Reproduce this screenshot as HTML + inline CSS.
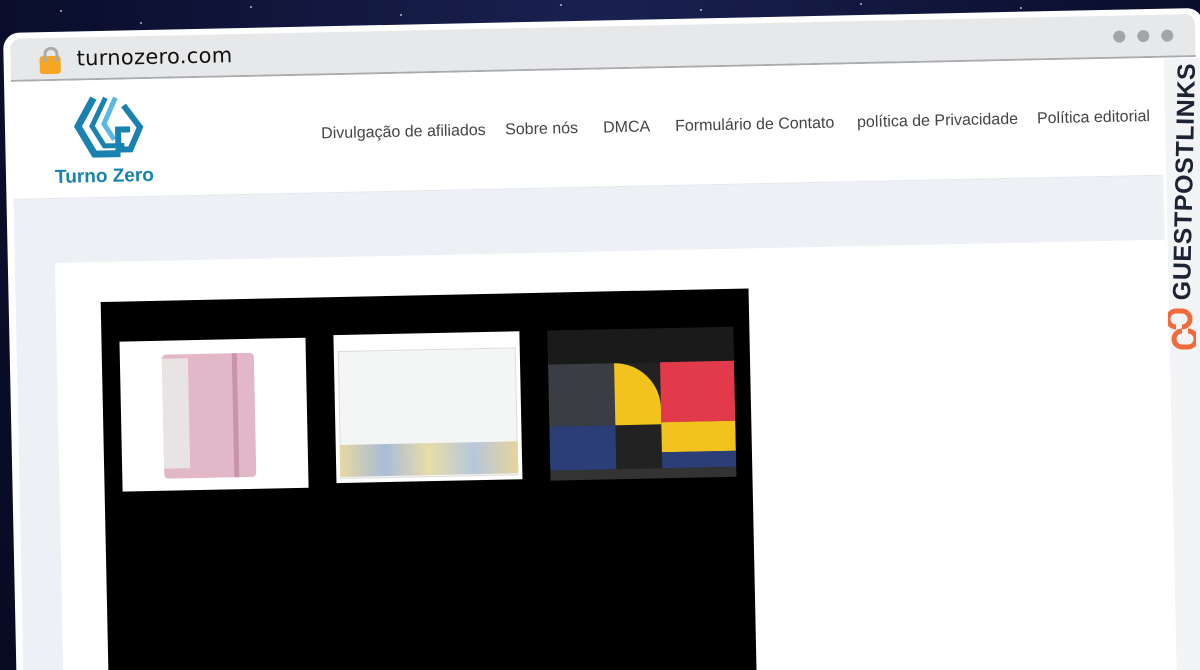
<!DOCTYPE html>
<html><head><meta charset="utf-8"><style>
*{margin:0;padding:0;box-sizing:border-box}
html,body{width:1200px;height:670px;overflow:hidden}
body{background:radial-gradient(ellipse at 50% 0%,#1a2150 0%,#0b1030 60%,#070a22 100%);font-family:"Liberation Sans","DejaVu Sans",sans-serif;position:relative}
.star{position:absolute;width:2px;height:2px;background:#fff;border-radius:50%;opacity:.7}
.frame{position:absolute;left:3px;top:33px;width:1200px;height:680px;background:#fff;border-radius:16px;transform-origin:0 0;transform:rotate(-1.2deg);overflow:hidden}
.bar{position:absolute;left:7px;top:6px;right:8px;height:43px;background:#e7e8ea;border-radius:10px 10px 0 0;border-bottom:2px solid #a9abaf}
.url{position:absolute;left:66px;top:9px;font-size:21px;color:#111;font-family:"DejaVu Sans",sans-serif;letter-spacing:.3px}
.lock{position:absolute;left:29px;top:18px;width:21px;height:18px;background:#f6a623;border-radius:3px}
.lock:before{content:"";position:absolute;left:4px;top:-9px;width:9px;height:12px;border:3px solid #aaa;border-bottom:none;border-radius:7px 7px 0 0}
.dots{position:absolute;right:22px;top:14px}
.dots i{display:inline-block;width:12px;height:12px;border-radius:50%;background:#a4a5a7;margin-left:12px}
.nav{position:absolute;left:7px;top:51px;width:1150px;height:116px;background:#fff;border-bottom:1px solid #e3e7ec}
.nav a{position:absolute;top:48px;font-size:16px;color:#444;white-space:nowrap;text-decoration:none}
.content{position:absolute;left:7px;top:167px;width:1150px;height:600px;background:#edf1f6}
.card{position:absolute;left:40px;top:64px;width:1110px;height:560px;background:#fff}
.black{position:absolute;left:45px;top:40px;width:648px;height:460px;background:#000}
.img{position:absolute;background:#fff;overflow:hidden}
.side{position:absolute;left:1160px;top:50px;width:40px;height:700px;background:#f3f4f6}
.gpl{position:absolute;left:1168px;top:300px;transform:rotate(-88.8deg);transform-origin:0 0;font-size:25px;font-weight:bold;color:#1c2333;letter-spacing:.6px;white-space:nowrap;line-height:28px}
</style></head><body>
<div class="star" style="left:60px;top:10px"></div><div class="star" style="left:250px;top:6px"></div><div class="star" style="left:400px;top:14px"></div><div class="star" style="left:560px;top:4px"></div><div class="star" style="left:700px;top:9px"></div><div class="star" style="left:860px;top:3px"></div><div class="star" style="left:1020px;top:7px"></div><div class="star" style="left:140px;top:22px"></div><div class="star" style="left:1192px;top:500px"></div>
<div class="frame">
  <div class="bar"><div class="lock"></div><div class="url">turnozero.com</div><div class="dots"><i></i><i></i><i></i></div></div>
  <div class="nav">
    <svg style="position:absolute;left:60px;top:12px" width="74" height="66" viewBox="0 0 74 66">
      <g fill="none" stroke-linejoin="miter">
        <path d="M22 4 L6 32 L22 60 L48 60" stroke="#1a82b0" stroke-width="7"/>
        <path d="M34 4 L20 32 L32 52 L52 52" stroke="#1a82b0" stroke-width="5"/>
        <path d="M44 4 L32 30 L42 46" stroke="#5bb8e3" stroke-width="5"/>
        <path d="M52 12 L68 34 L58 56 L46 56 L46 36 L58 36" stroke="#1a82b0" stroke-width="6"/>
      </g>
    </svg>
    <div style="position:absolute;left:42px;top:84px;font-size:19px;font-weight:bold;color:#1a82b0">Turno Zero</div>
    <a style="left:309px">Divulgação de afiliados</a>
    <a style="left:493px">Sobre nós</a>
    <a style="left:591px">DMCA</a>
    <a style="left:663px">Formulário de Contato</a>
    <a style="left:845px">política de Privacidade</a>
    <a style="left:1025px">Política editorial</a>
  </div>
  <div class="content">
    <div class="card">
      <div class="black">
        <div class="img" style="left:18px;top:40px;width:186px;height:150px">
          <div style="position:absolute;left:42px;top:14px;width:92px;height:124px;background:#e2b8c8;border-radius:4px"></div>
          <div style="position:absolute;left:42px;top:18px;width:26px;height:110px;background:#e8e4e4"></div>
          <div style="position:absolute;left:112px;top:14px;width:5px;height:124px;background:#c993ab"></div>
        </div>
        <div class="img" style="left:232px;top:38px;width:186px;height:148px">
          <div style="position:absolute;left:4px;top:16px;width:178px;height:128px;background:#f4f5f5;border:1px solid #ddd"></div>
          <div style="position:absolute;left:4px;top:110px;width:178px;height:32px;background:linear-gradient(90deg,#e8d7a0,#a9bcd8,#e9dca8,#b6c7dc,#e6d49b)"></div>
        </div>
        <div class="img" style="left:446px;top:38px;width:186px;height:150px;background:#222">
          <div style="position:absolute;left:0;top:0;width:186px;height:34px;background:#1a1a1a"></div>
          <div style="position:absolute;left:0;top:34px;width:66px;height:62px;background:#3a3d44"></div>
          <div style="position:absolute;left:66px;top:34px;width:46px;height:62px;background:#f2c21e;border-radius:0 46px 0 0"></div>
          <div style="position:absolute;left:112px;top:34px;width:74px;height:60px;background:#e33a4b"></div>
          <div style="position:absolute;left:0;top:96px;width:66px;height:44px;background:#2b3e78"></div>
          <div style="position:absolute;left:112px;top:94px;width:74px;height:30px;background:#f2c21e"></div>
          <div style="position:absolute;left:112px;top:124px;width:74px;height:16px;background:#2b3e78"></div>
          <div style="position:absolute;left:0;top:140px;width:186px;height:10px;background:#333"></div>
        </div>
      </div>
    </div>
  </div>
  <div class="side"></div>
</div>
<div class="gpl">GUESTPOSTLINKS</div>
<svg style="position:absolute;left:1168px;top:305px" width="28" height="48" viewBox="0 0 28 48"><g fill="none" stroke="#f26a3b" stroke-width="5"><path d="M8 22 a8 8 0 0 1 0-16 h6 a8 8 0 0 1 0 16"/><path d="M14 26 a8 8 0 0 0 0 16 h6 a8 8 0 0 0 0-16"/></g></svg>
</body></html>
